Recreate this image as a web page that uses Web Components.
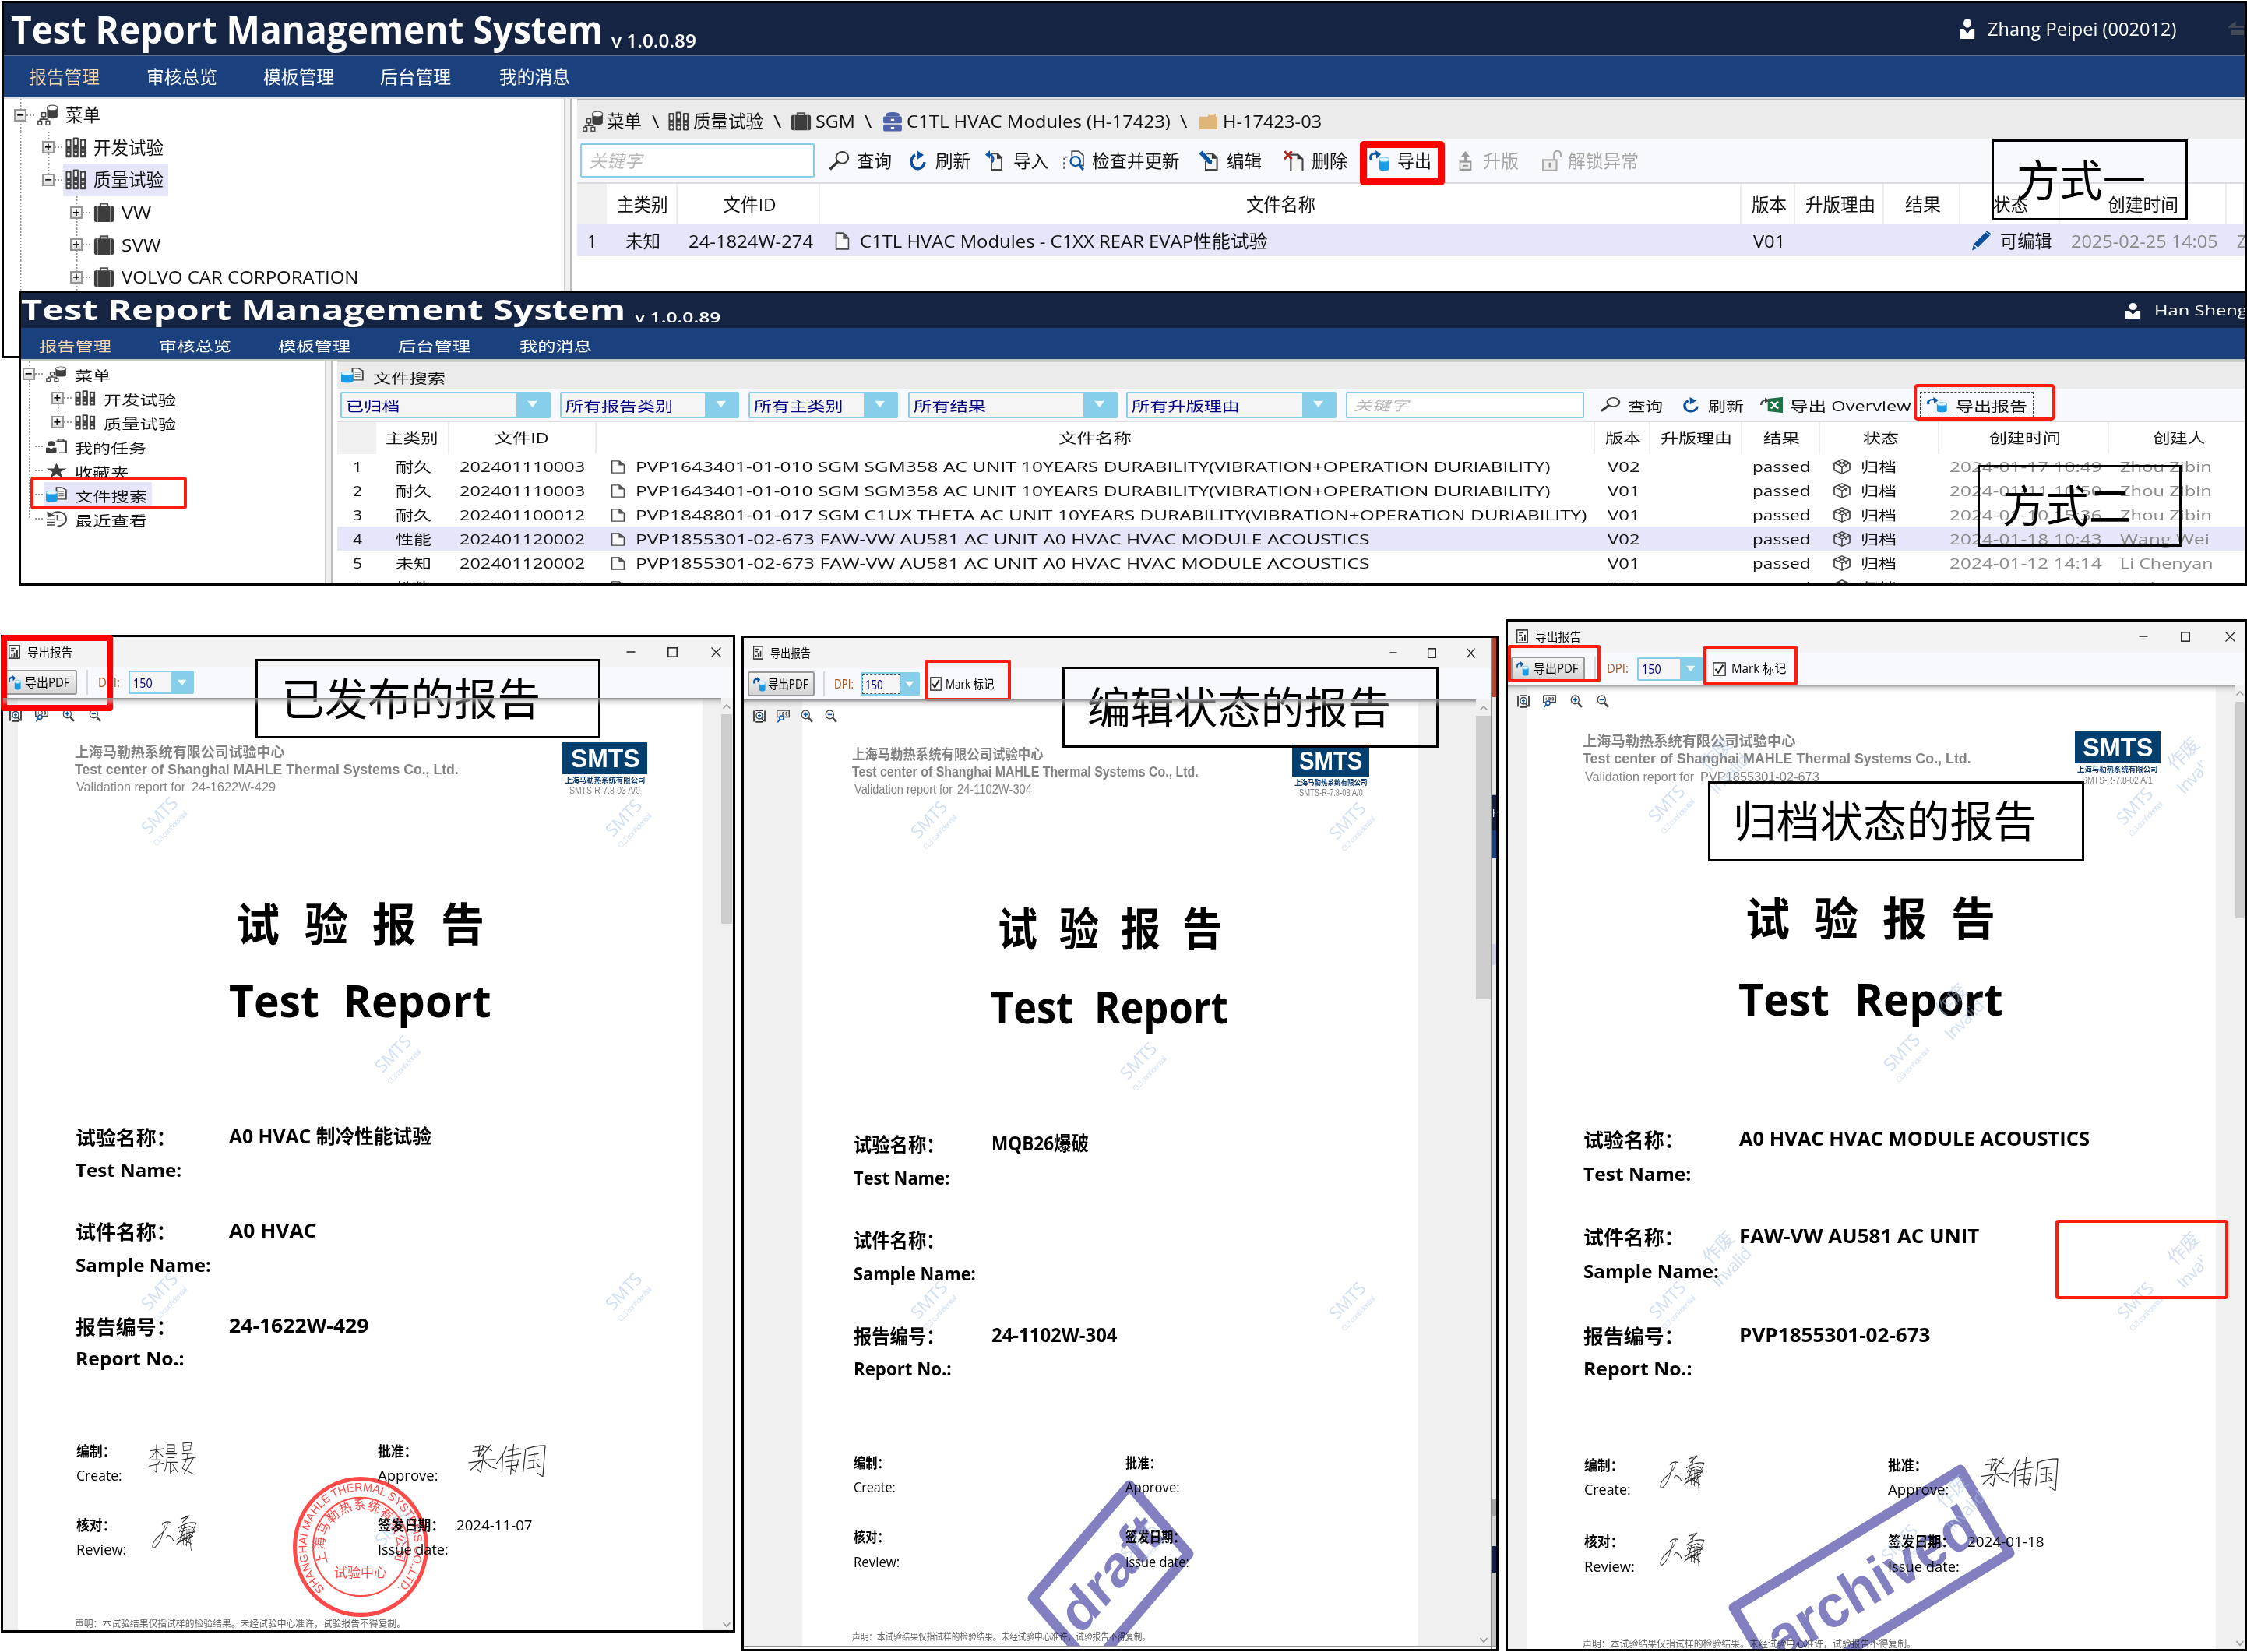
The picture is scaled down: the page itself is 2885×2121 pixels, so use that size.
<!DOCTYPE html>
<html lang="zh">
<head>
<meta charset="utf-8">
<title>Test Report Management System</title>
<style>
html,body{margin:0;padding:0;background:#fff}
body{width:2885px;height:2121px;overflow:hidden;font-family:"Open Sans","Noto Sans CJK SC",sans-serif;color:#111}
</style>
</head>
<body>
<guide-board></guide-board>
<script>
/* ---------- small layout helpers ---------- */
const FLEX = `*{box-sizing:border-box}.row{display:flex;align-items:center;flex:none}.col{display:flex;flex-direction:column;flex:none}.row>div,.col>div{flex:none}.row>div{display:flex;align-items:center}`;
// Horizontal strip: items are [x, width, html]; gaps come from successive x values.
function row(ox, items, style = '') {
  let p = ox, h = '';
  for (const [x, w, html] of items) { h += `<div style="margin-left:${(x - p).toFixed(1)}px;width:${w}px">${html}</div>`; p = x + w; }
  return `<div class="row" style="${style}">${h}</div>`;
}
// Vertical stack: items are [centre y, height, html].
function col(oy, items, style = '') {
  let p = oy, h = '';
  for (const [c, ht, html] of items) { h += `<div style="margin-top:${(c - ht / 2 - p).toFixed(1)}px;height:${ht}px;display:flex;align-items:center">${html}</div>`; p = c + ht / 2; }
  return `<div class="col" style="${style}">${h}</div>`;
}
const T = (w, s, text, style = '') => `<fit-text w="${w}" s="${s}" style="${style}">${text}</fit-text>`;
const t = (x, w, s, text, style) => [x, w, T(w, s, text, style)];
const I = (name, w, h) => `<ui-icon name="${name}" w="${w}" h="${h}"></ui-icon>`;
const i = (x, w, h, name) => [x, w, I(name, w, h)];

/* ---------- text set to a given advance width ---------- */
class FitText extends HTMLElement {
  connectedCallback() {
    if (this.shadowRoot) return;
    const w = +this.getAttribute('w'), s = +this.getAttribute('s');
    this.attachShadow({ mode: 'open' }).innerHTML = `<style>:host{display:block;flex:none;width:${w}px;font-size:${s}px;line-height:${Math.round(s * 1.3)}px;height:${Math.round(s * 1.3)}px}span{display:inline-block;white-space:pre;transform-origin:0 50%}</style><span><slot></slot></span>`;
    const sp = this.shadowRoot.querySelector('span');
    const n = sp.offsetWidth;
    if (n) sp.style.transform = `scaleX(${(w / n).toFixed(4)})`;
  }
}
customElements.define('fit-text', FitText);

/* ---------- icons, 24 x 24 grid ---------- */
const PAGE = '<path d="M8 4h8l5 5v14H8z" fill="#f4f4f4" stroke="#444" stroke-width="1.8"/><path d="M15 4v6h6z" fill="#333"/>';
const ARR = '<path d="M2 11C0 6 3 2.500 9 4" fill="none" stroke="#0a56a5" stroke-width="2.600"/><path d="M7 0l6 4.500-5 5z" fill="#0a56a5"/>';
const CYL = '<path d="M11 10.500V21c0 3 11 3 11 0V10.500z" fill="#1a9be6"/><ellipse cx="16.500" cy="10.500" rx="5.500" ry="2.600" fill="#e4f5ff" stroke="#6cc3f2" stroke-width="1"/>';
const BINDER = (x, y) => `<rect x="${x}" y="${y}" width="6.4" height="${23.4 - y}" rx="1" fill="#3f3f3f"/><rect x="${x + 1.7}" y="${y + 2}" width="3" height="6.5" rx="1" fill="#f3f3f3"/><rect x="${x + 1.7}" y="14" width="3" height="1.4" fill="#ddd"/><circle cx="${x + 3.2}" cy="19.4" r="1.6" fill="#f3f3f3"/>`;
const ICONS = {
  net: '<path d="M11 4v10c0 3 12 3 12 0V4z" fill="#3f3f3f"/><ellipse cx="17" cy="4" rx="6" ry="3" fill="#fff" stroke="#555" stroke-width="1"/><path d="M7 14v3M3 20v-3h9v3" fill="none" stroke="#444" stroke-width="1.4"/><g fill="#fff" stroke="#444" stroke-width="1.3"><rect x="5" y="9.5" width="4.4" height="4.6"/><rect x=".8" y="19" width="4.2" height="4.3"/><rect x="9.8" y="19" width="4.2" height="4.3"/></g>',
  binders: BINDER(0.4, 2) + BINDER(8.6, .4) + BINDER(16.8, 2),
  casing: '<path d="M8 5V2.2h8V5" fill="none" stroke="#555" stroke-width="2"/><rect x=".8" y="4.6" width="22.4" height="18.6" rx="2" fill="#3d3d3d"/><path d="M4.2 5v18M19.800 5v18" stroke="#e8e8e8" stroke-width="1.3"/>',
  cabinet: '<path d="M4 4c0-4 16-4 16 0v2H4z" fill="#4d62a8"/><rect x="1" y="6" width="22" height="8" rx="1.5" fill="#4d62a8"/><rect x="1" y="15.500" width="22" height="8" rx="1.5" fill="#4d62a8"/><path d="M10 10h4M10 19.5h4" stroke="#fff" stroke-width="2"/>',
  folder: '<path d="M1 6h10l2-4h8v4h2v17H1z" fill="#deb679"/><path d="M13 3.500h6" stroke="#f3e2c0" stroke-width="1.5"/>',
  search: '<circle cx="15.500" cy="8" r="7" fill="#fafafa" stroke="#3c3c3c" stroke-width="1.8"/><path d="M10.500 13L1.500 22.500" stroke="#333" stroke-width="3.200"/>',
  refresh: '<path d="M9 5.500A8.500 8.500 0 1 0 21 14" fill="none" stroke="#0a4f9c" stroke-width="3.600"/><path d="M11 0l9 5.500-8.500 5.500z" fill="#0a4f9c"/>',
  imp: PAGE + '<path d="M9 14C12 10 10 5 3 5" fill="none" stroke="#0a56a5" stroke-width="2.200"/><path d="M6 0v10L0 5z" fill="#0a56a5"/>',
  check: '<path d="M10 7V1h8l5 5v12h-5" fill="none" stroke="#555" stroke-width="1.700"/><path d="M1 22V8h5" fill="none" stroke="#555" stroke-width="1.600" stroke-dasharray="3 2"/><circle cx="14" cy="13" r="5.500" fill="#eef6fd" stroke="#0a56a5" stroke-width="2"/><path d="M18 17l5 6" stroke="#0a56a5" stroke-width="3"/>',
  edit: PAGE + '<path d="M0 4L4 0l12 13-1 4-4-1z" fill="#0a56a5" stroke="#fff" stroke-width=".8"/>',
  del: PAGE.replace('M8 4h8', 'M8 5h8') + '<path d="M1 1l8 9M9 1l-8 9" stroke="#b3261e" stroke-width="2.600"/>',
  exp: CYL + ARR,
  up: '<path d="M12 13V4" stroke="#999" stroke-width="4"/><path d="M4 7l8-7 8 7z" fill="#999"/><rect x="2" y="13" width="20" height="10" fill="#eee" stroke="#999" stroke-width="2.200"/><path d="M7 18h10" stroke="#999" stroke-width="2"/>',
  lock: '<path d="M15 11V5c0-6 8-6 8 0v3" fill="none" stroke="#aaa" stroke-width="2"/><rect x="2" y="11" width="16" height="12" fill="#eee" stroke="#aaa" stroke-width="2"/><path d="M10 14v6" stroke="#999" stroke-width="2.400"/>',
  doc: '<path d="M2 1.200h12l8 7v14.600H2z" fill="#fafafa" stroke="#4a4a4a" stroke-width="2"/><path d="M13 1v8h9z" fill="#555"/>',
  pencil: '<path d="M17 2l5 4L8 20l-5-4z" fill="#0a4f9c"/><path d="M18.500 0l5 4-1 1.500-5-4zM2.400 17.500l4.200 3.500L1 23.500z" fill="#0a4f9c"/>',
  cube: '<g fill="none" stroke="#444" stroke-width="1.700" stroke-linejoin="round"><path d="M12 1l10 5.500v11L12 23 2 17.500v-11z"/><path d="M2 6.500l10 5.500 10-5.500M12 12v11M7 3.800l10 5.500v4M17 3.800L7 9.300"/></g>',
  user: '<ellipse cx="12" cy="5.500" rx="6" ry="5.400" fill="#fff"/><path d="M1 12h6l5 6 5-6h6v12H1z" fill="#fff"/>',
  swap: '<path d="M24 9H5M10 3L2 9h8zM6 16h18v4H6z" fill="#454b56" stroke="#454b56" stroke-width="3"/>',
  task: '<circle cx="6" cy="8" r="4" fill="#3f3f3f"/><path d="M0 14h4l2 3 2-3h4v8H0z" fill="#3f3f3f"/><path d="M12 4h11v18h-8M14 4V1h6v3" fill="none" stroke="#444" stroke-width="1.800"/>',
  star: '<path d="M12 .5l3 8.500h8.500l-7 5.300 2.700 9L12 18l-7.200 5.300 2.700-9-7-5.300H9z" fill="#3f3f3f"/>',
  fsearch: '<path d="M12 1h6l5 4v14H12z" fill="#fff" stroke="#444" stroke-width="1.600"/><path d="M14.500 7h6M14.500 10.500h6M14.500 14h6" stroke="#555" stroke-width="1.300"/><path d="M0 9v12c0 3 13 3 13 0V9z" fill="#1a9be6"/><ellipse cx="6.500" cy="9" rx="6.500" ry="2.600" fill="#e4f5ff" stroke="#6cc3f2"/>',
  history: '<path d="M7 4c7-6 16-1 16 8s-7 12-10 11" fill="none" stroke="#444" stroke-width="2"/><path d="M1 1l1 9 8-3z" fill="#444"/><path d="M1 13.500h9M1 17.500h9M1 21.500h9" stroke="#444" stroke-width="1.800"/><path d="M13 6v8h6" fill="none" stroke="#444" stroke-width="1.600"/>',
  excel: '<path d="M8 2.500L24 0v24L8 21.500z" fill="#1e7145"/><path d="M11.500 7l7.500 10.500M19 6.500L11.500 17.500" stroke="#fff" stroke-width="2.300"/><path d="M1 12C1 7 3 5 6 5" fill="none" stroke="#444" stroke-width="2"/><path d="M5 1l5 4-5 4z" fill="#444"/>',
  rep: '<rect x="1.200" y="1.200" width="21.600" height="21.600" fill="#fff" stroke="#333" stroke-width="2.200"/><path d="M5 6h9M5 10h6" stroke="#333" stroke-width="1.800"/><path d="M7 20v-4M12 20v-7M17.500 20V9" stroke="#333" stroke-width="3"/>',
  fit: '<path d="M1.500 2v20M22.500 2v20M5 1.500h14M5 22.500h14" stroke="#333" stroke-width="2.600"/><circle cx="12" cy="11" r="6" fill="#fff" stroke="#345" stroke-width="2"/><path d="M12 8v6M9 11h6" stroke="#0a56a5" stroke-width="2"/><path d="M16 16l5 5" stroke="#333" stroke-width="2.500"/>',
  one: '<path d="M1 1.500h22v12H11" fill="none" stroke="#444" stroke-width="2"/><path d="M1 1.500v12h3" fill="none" stroke="#444" stroke-width="2"/><path d="M6 5v5M11 5h2v5h-2zM17 5h2v5h-2z" fill="none" stroke="#444" stroke-width="1.400"/><circle cx="9" cy="15" r="3.800" fill="#fff" stroke="#0a56a5" stroke-width="2"/><path d="M6 18l-4 5" stroke="#0a56a5" stroke-width="2.500"/>',
  zin: '<circle cx="9.500" cy="9" r="7.600" fill="#fff" stroke="#444" stroke-width="1.800"/><path d="M9.500 5v8M5.500 9h8" stroke="#0a56a5" stroke-width="2.400"/><path d="M15 14.500l7.500 8" stroke="#444" stroke-width="3.600"/>',
  zout: '<circle cx="9.500" cy="9" r="7.600" fill="#fff" stroke="#444" stroke-width="1.800"/><path d="M5.500 9h8" stroke="#0a56a5" stroke-width="2.400"/><path d="M15 14.500l7.500 8" stroke="#444" stroke-width="3.600"/>',
  min: '<path d="M1 12h22" stroke="#222" stroke-width="3"/>',
  max: '<rect x="1.500" y="1.500" width="21" height="21" fill="none" stroke="#222" stroke-width="2.800"/>',
  close: '<path d="M1 1l22 22M23 1L1 23" stroke="#222" stroke-width="2.400"/>',
  tri: '<path d="M2 2h20L12 22z" fill="#f4fbff"/>',
  chev: '<path d="M3 17l9-9 9 9" fill="none" stroke="#999" stroke-width="3"/>',
  chevd: '<path d="M3 7l9 9 9-9" fill="none" stroke="#999" stroke-width="3"/>',
  tick: '<rect x="1.200" y="1.200" width="21.600" height="21.600" fill="#fff" stroke="#333" stroke-width="2"/><path d="M5 12l5 6 9-13" fill="none" stroke="#222" stroke-width="3"/>'
};
class UiIcon extends HTMLElement {
  connectedCallback() {
    const w = this.getAttribute('w'), h = this.getAttribute('h');
    if (!this.shadowRoot) this.attachShadow({ mode: 'open' }).innerHTML = `<style>:host{display:block;flex:none;width:${w}px;height:${h}px}svg{display:block}</style><svg width="${w}" height="${h}" viewBox="0 0 24 24" preserveAspectRatio="none">${ICONS[this.getAttribute('name')]}</svg>`;
  }
}
customElements.define('ui-icon', UiIcon);

/* ---------- combo box ---------- */
class ComboBox extends HTMLElement {
  connectedCallback() {
    if (this.shadowRoot) return;
    const g = k => +this.getAttribute(k);
    this.attachShadow({ mode: 'open' }).innerHTML = `<style>:host{display:flex;box-sizing:border-box;flex:none;width:${g('w')}px;height:${g('h')}px;border:2px solid #87ceeb;border-radius:2px;background:#f5f5f5;color:#000080}
    .v{flex:1;display:flex;align-items:center;padding-left:${g('pad') || 5}px;min-width:0;padding-top:${g('dy')}px}.a{width:${g('a')}px;background:#87ceeb;display:flex;align-items:center;justify-content:center}
    :host([focus]) .v{outline:1px dashed #555;outline-offset:-1px}</style><div class="v"><slot></slot></div><div class="a">${I('tri', g('h') * .45, g('h') * .3)}</div>`;
  }
}
customElements.define('combo-box', ComboBox);

/* ---------- tree row ---------- */
class TreeRow extends HTMLElement {
  connectedCallback() {
    if (this.shadowRoot) return;
    const g = k => this.getAttribute(k), cw = +g('cell'), ih = g('ih');
    // lines: one letter per cell; f=full, t=top half, b=bottom half, n=none
    const lines = g('lines').split(''), last = lines.length - 1;
    const cells = lines.map((l, n) => `<div class="c ${l}">${n === last ? (g('exp') ? `<b>${g('exp')}</b>` : '<b class="x"></b>') + '<u></u>' : ''}</div>`).join('');
    this.attachShadow({ mode: 'open' }).innerHTML = `<style>:host{display:flex;align-items:stretch;height:${g('h')}px;flex:none}
    .c{width:${cw}px;display:flex;align-items:center;justify-content:flex-end;background:repeating-linear-gradient(#999 0 2px,transparent 2px 4px) no-repeat ${cw / 2}px 0/1.5px 100%}
    .c.t{background-size:1.5px 50%}.c.b{background-position:${cw / 2}px 100%;background-size:1.5px 50%}.c.n{background:none}
    b{box-sizing:border-box;width:16px;height:16px;border:2px solid #969696;background:linear-gradient(#fff,#ddd);font:bold 16px/11px "Liberation Sans",sans-serif;text-align:center;color:#111}
    b.x{visibility:hidden}u{width:${(cw - 16) / 2}px;border-top:2px dotted #999}
    .i{display:flex;align-items:center;padding:0 ${g('sel') !== null ? 6 : 0}px 0 3px;margin-left:1px;${g('sel') !== null ? 'background:#e6e6fa' : ''}}ui-icon{margin-right:${g('gap') || 9}px}</style>${cells}<div class="i">${I(g('icon'), 27, ih)}<slot></slot></div>`;
  }
}
customElements.define('tree-row', TreeRow);

/* ---------- main application windows ---------- */
const GRAY = 'color:#8a8a8a';
function grid(ox, hx, cols, h) {
  // header cells with thin separators; cols: [x, w, label]; hx: separator positions
  let p = ox, html = '';
  hx.forEach((x, n) => {
    const c = cols[n];
    html += `<div style="width:${x - p}px;height:${h}px;${n ? 'border-right:2px solid #ededed' : 'background:#f0f0f0'}">${c ? `<div style="margin-left:${c[0] - p}px">${T(c[1], c[3], c[2])}</div>` : ''}</div>`;
    p = x;
  });
  return `<div class="row">${html}</div>`;
}
const WIN = `${FLEX}:host{display:flex;flex-direction:column;box-sizing:border-box;border:3px solid #000;background:#fff;overflow:hidden}
.top{background:#152442;color:#fff}.nav{background:#1a417e;color:#fff}.main{display:flex;flex:1;min-height:0}.side{flex:none;overflow:hidden}
.split{flex:none;background:#f0f0f0;border-left:2px solid #ccc;border-right:3px solid #bbb}.body{flex:1;min-width:0;overflow:hidden;display:flex;flex-direction:column}
.inp{box-sizing:border-box;border:2px solid #87ceeb;background:#fff;border-radius:2px;display:flex;align-items:center;color:#b8b8b8;font-style:italic}.g{color:#a6a6a6}`;
const NAV = ['报告管理', '审核总览', '模板管理', '后台管理', '我的消息'];
class AppLatest extends HTMLElement {
  connectedCallback() {
    if (this.shadowRoot) return;
    const s = 22.5, tr = (a, w, txt) => `<tree-row h="41.6" cell="36" ih="27" ${a}>${T(w, s, txt)}</tree-row>`;
    this.attachShadow({ mode: 'open' }).innerHTML = `<style>${WIN}.side{width:719px;padding:0 0 0 3px}.split{width:11px;margin-right:6px}</style>
    ${row(5, [[14, 760, `<div style="margin-top:2px">${T(760, 48, 'Test Report Management System', 'font-weight:700')}</div>`], [785, 109, `<div style="margin-top:30px">${T(109, 23, 'v 1.0.0.89', 'font-weight:600')}</div>`], i(2516, 20, 26, 'user'), t(2552, 242, 23, 'Zhang Peipei (002012)'), i(2861, 20, 20, 'swap')], 'height:66px').replace('class="row"', 'class="row top"')}
    ${row(5, NAV.map((n, k) => t([37, 188, 338, 488, 641][k], 91, 22.5, n, k ? '' : 'color:#f6d7b0')), 'height:55px;border-top:2px solid #60708f;border-bottom:1px solid #54698f').replace('class="row"', 'class="row nav"')}
    <div class="main" style="border-top:2px solid #ddd"><div class="side">
    ${tr('lines="f" exp="−" icon="net"', 45, '菜单')}${tr('lines="ff" exp="+" icon="binders"', 90, '开发试验')}${tr('lines="ft" exp="−" icon="binders" sel', 90, '质量试验')}
    ${tr('lines="fnf" exp="+" icon="casing"', 38, 'VW')}${tr('lines="fnf" exp="+" icon="casing"', 51, 'SVW')}${tr('lines="fnf" exp="+" icon="casing"', 304, 'VOLVO CAR CORPORATION')}
    </div><div class="split"></div><div class="body">
    ${row(741, [i(748, 27, 27, 'net'), t(779, 45, s, '菜单'), t(837, 9, s, '\\'), i(858, 27, 25, 'binders'), t(890, 90, s, '质量试验'), t(993, 10, s, '\\'), i(1015, 27, 25, 'casing'), t(1047, 51, s, 'SGM'), t(1110, 9, s, '\\'), i(1133, 26, 26, 'cabinet'), t(1164, 339, s, 'C1TL HVAC Modules (H-17423)'), t(1515, 9, s, '\\'), i(1539, 25, 23, 'folder'), t(1570, 127, s, 'H-17423-03')], 'height:51px;background:#ebebeb;border-top:2px solid #b5b5b5;padding-top:4px')}
    ${row(741, [[745, 301, `<div class="inp" style="width:301px;height:44px;padding-left:9px">${T(69, s, '关键字')}</div>`], i(1064, 27, 25, 'search'), t(1100, 45, s, '查询'), i(1166, 24, 26, 'refresh'), t(1201, 45, s, '刷新'), i(1265, 24, 26, 'imp'), t(1301, 45, s, '导入'), i(1365, 27, 26, 'check'), t(1402, 113, s, '检查并更新'), i(1539, 27, 26, 'edit'), t(1575, 45, s, '编辑'), i(1648, 28, 27, 'del'), t(1684, 46, s, '删除'), i(1758, 28, 27, 'exp'), t(1794, 44, s, '导出'), i(1873, 17, 25, 'up'), t(1904, 46, s, '升版', 'color:#a6a6a6'), i(1979, 26, 27, 'lock'), t(2013, 91, s, '解锁异常', 'color:#a6a6a6')], 'height:58px;background:#f8f8ff;border-bottom:2px solid #dcdcdc')}
    ${grid(741, [779, 870, 1053, 2236, 2305, 2419, 2517, 2645, 2859, 2882], [null, [792, 66, '主类别', s], [928, 69, '文件ID', s], [1600, 89, '文件名称', s], [2249, 45, '版本', s], [2318, 90, '升版理由', s], [2446, 46, '结果', s], [2559, 45, '状态', s], [2706, 91, '创建时间', s]], 52)}
    ${row(741, [t(754, 12, s, '1'), t(803, 45, s, '未知'), t(884, 160, s, '24-1824W-274'), i(1072, 19, 23, 'doc'), t(1104, 523, s, 'C1TL HVAC Modules - C1XX REAR EVAP性能试验'), t(2251, 41, s, 'V01'), i(2531, 26, 26, 'pencil'), t(2568, 67, s, '可编辑'), t(2659, 189, s, '2025-02-25 14:05', GRAY), t(2872, 12, s, 'Z', GRAY)], 'height:41px;background:#e6e6fa;padding-top:1px')}
    </div></div>`;
  }
}
customElements.define('app-latest', AppLatest);

class AppSearch extends HTMLElement {
  connectedCallback() {
    if (this.shadowRoot) return;
    const s = 17.5, tr = (a, w, txt) => `<tree-row h="31.100" cell="37" ih="20" gap="10" ${a}><div style="margin-top:5px">${T(w, s, txt)}</div></tree-row>`;
    const cb = (x, w, a, tw, txt) => [x, w, `<combo-box w="${w}" h="34" a="${a}" pad="5" dy="4">${T(tw, s, txt)}</combo-box>`];
    const a1 = 'PVP1643401-01-010 SGM SGM358 AC UNIT 10YEARS DURABILITY(VIBRATION+OPERATION DURIABILITY)';
    const a3 = 'PVP1848801-01-017 SGM C1UX THETA AC UNIT 10YEARS DURABILITY(VIBRATION+OPERATION DURIABILITY)';
    const a4 = 'PVP1855301-02-673 FAW-VW AU581 AC UNIT A0 HVAC HVAC MODULE ACOUSTICS';
    const rows = [['耐久', '202401110003', a1, 1174, 'V02', '2024-01-17 10:49', 'Zhou Zibin', 118], ['耐久', '202401110003', a1, 1174, 'V01', '2024-01-11 10:50', 'Zhou Zibin', 118], ['耐久', '202401100012', a3, 1222, 'V01', '2024-01-10 15:36', 'Zhou Zibin', 118], ['性能', '202401120002', a4, 942, 'V02', '2024-01-18 10:43', 'Wang Wei', 115], ['未知', '202401120002', a4, 942, 'V01', '2024-01-12 14:14', 'Li Chenyan', 120], ['性能', '202401120001', 'PVP1855301-02-674 FAW-VW AU581 AC UNIT A0 HVAC AIR FLOW MEASUREMENT', 928, 'V01', '2024-01-12 10:24', 'Li Chenyan', 120]];
    this.attachShadow({ mode: 'open' }).innerHTML = `<style>${WIN}.side{width:390px;padding-top:0}.side tree-row{margin-left:-9px}.split{width:11px;margin-right:5px}</style>
    ${row(27, [[27, 776, `<div style="margin-top:-3px">${T(776, 36.5, 'Test Report Management System', 'font-weight:700')}</div>`], [815, 111, `<div style="margin-top:18px">${T(111, 18, 'v 1.0.0.89', 'font-weight:600')}</div>`], i(2728, 21, 20, 'user'), t(2766, 120, 18, 'Han Sheng')], 'height:45px').replace('class="row"', 'class="row top"')}
    ${row(27, NAV.map((n, k) => t([50, 204, 357, 511, 667][k], 93, 17.5, n, k ? '' : 'color:#f6d7b0')), 'height:40px;padding-top:6px').replace('class="row"', 'class="row nav"')}
    <div class="main" style="border-top:2px solid #c8c8c8"><div class="side"><div style="height:1px"></div>
    ${tr('lines="f" exp="−" icon="net"', 46, '菜单')}${tr('lines="ff" exp="+" icon="binders"', 93, '开发试验')}${tr('lines="ft" exp="+" icon="binders"', 93, '质量试验')}${tr('lines="f" icon="task"', 92, '我的任务')}${tr('lines="f" icon="star"', 70, '收藏夹')}${tr('lines="f" icon="fsearch" sel', 93, '文件搜索')}${tr('lines="t" icon="history"', 93, '最近查看')}
    </div><div class="split"></div><div class="body">
    ${row(433, [i(438, 29, 20, 'fsearch'), [479, 93, `<div style="margin-top:6px">${T(93, s, '文件搜索')}</div>`]], 'height:36px;background:#ebebeb;border-top:2px solid #d0d0d0')}
    ${row(433, [cb(437, 270, 42, 70, '已归档'), cb(719, 230, 42, 138, '所有报告类别'), cb(961, 192, 42, 115, '所有主类别'), cb(1166, 269, 42, 93, '所有结果'), cb(1446, 270, 42, 139, '所有升版理由'), [1728, 306, `<div class="inp" style="width:306px;height:34px;padding-left:8px;padding-top:2px">${T(71, s, '关键字')}</div>`], i(2054, 27, 19, 'search'), t(2090, 45, s, '查询', 'margin-top:3px'), i(2159, 23, 20, 'refresh'), t(2193, 46, s, '刷新', 'margin-top:3px'), i(2260, 29, 20, 'excel'), t(2298, 155, s, '导出 Overview', 'margin-top:3px'), [2465, 146, `<div style="width:146px;height:33px;border:1.500px dashed #444;display:flex;align-items:center;gap:9px;padding-left:8px">${I('exp', 28, 20)}${T(92, s, '导出报告', 'margin-top:3px')}</div>`]], 'height:43px;background:#f8f8ff;border-bottom:2px solid #dcdcdc')}
    ${grid(433, [483, 577, 766, 2048, 2119, 2237, 2337, 2490, 2708, 2890], [null, [495, 68, '主类别', s], [635, 70, '文件ID', s], [1359, 94, '文件名称', s], [2061, 46, '版本', s], [2132, 92, '升版理由', s], [2264, 47, '结果', s], [2392, 46, '状态', s], [2554, 92, '创建时间', s], [2764, 68, '创建人', s]], 41)}
    ${rows.map((r, k) => row(433, [t(453, 12, s, k + 1 + ''), t(508, 46, s, r[0]), t(590, 161, s, r[1]), i(784, 19, 17, 'doc'), t(816, r[3], s, r[2]), t(2064, 41, s, r[4]), t(2250, 75, s, 'passed'), i(2353, 24, 20, 'cube'), t(2389, 46, s, '归档'), t(2503, 195, s, r[5], GRAY), t(2722, r[7], s, r[6], GRAY)], `height:31px;padding-top:1px;${k === 3 ? 'background:#e6e6fa' : ''}`)).join('')}
    </div></div>`;
  }
}
customElements.define('app-search', AppSearch);

/* ---------- handwriting, seal, stamps, watermarks ---------- */
const SIG = {
  // drawn on a 100 x 44 pad
  li: '<path d="M4 12l26-3M16 4v18M16 11C12 17 7 20 3 22M17 12l12 8M7 24h17l-8 7M16 30v10l-4-2M2 32l28-4M36 4h14v9H37zM38 9h11M34 16h20M36 16c0 12-1 18-5 23M38 21h12M36 27h20M42 27v14l6-4M46 29l10 11M66 2l16-1-2 10-13 1zM67 6l14-1M65 16l20-1M74 15v6M64 24l27-4M76 19L65 35l22 8M86 21L68 42"/>',
  chai: '<path d="M9 4l11-2-6 14M15 2l-2 15M6 10l14-2M21 3l9 6M29 1L17 17M1 25c12-1 22-5 34-4M20 14l-4 24-4-4M17 22L3 35M19 21c5 6 10 11 17 12M49 3C46 12 42 19 36 26M44 15l-1 23M51 9l13-3M47 17l20-4M58 0l-4 41M47 24l17-3-4 16-5-5M49 30l15-2M72 7c8-3 17-5 26-5l-3 42-7-5M73 8l-3 29M77 15l12-2M77 23l13-2M76 33l15-3M84 13l-1 19M87 26l4 5"/>',
  pei: '<path d="M22 12c4-3 10-4 17-3M34 10C32 20 20 22 8 30 0 36-1 42 6 40 16 36 24 24 28 13M31 28c2-5 12-2 15 4l2-3M62 5l18-4-14 8M72 2c-2 12-4 18-10 24M57 16c9-4 24-8 38-6l-6 8M64 16l-5 5M66 17l10-2M63 21l12-3M80 14l8 2M78 18l10 1M55 30c10-5 22-9 38-9M66 21c-2 8-6 12-13 15M57 34l26-10M69 23l-2 14M75 20l-1 18M80 20l4 24M92 18L73 36M61 27l25 9M70 30l18-4"/>'
};
const sig = (n, x, y, w, h) => `<svg x="${x}" y="${y}" width="${w}" height="${h}" viewBox="0 0 100 44" preserveAspectRatio="none" fill="none" stroke="#2a2a2a" stroke-width="1.200" stroke-linecap="round" stroke-linejoin="round">${SIG[n]}</svg>`;
const wm = (x, y) => `<g transform="translate(${x} ${y}) rotate(-46)" fill="#a9c2e2" fill-opacity=".52"><text x="-28" y="2" font-size="22.500" textLength="56">SMTS</text><text x="-31" y="19" font-size="9.500" textLength="58">CL3 confidential</text></g>`;
const inv = (x, y) => `<g transform="translate(${x} ${y}) rotate(-46)" fill="#a9c2e2" fill-opacity=".52"><text x="-20" y="-7" font-size="24" textLength="47">作废</text><text x="-34" y="22" font-size="22" textLength="62">Invalid</text></g>`;
const SEAL = `<g transform="translate(463 1986) scale(1 1.035)" fill="none" stroke="#ff4a4a"><circle r="84.500" stroke-width="5"/><circle r="61" stroke-width="2"/>
<path id="o" d="M-46 52A69.400 69.400 0 1 1 44 53.600" stroke="none"/><path id="n" d="M-42 20A46.500 46.500 0 1 1 42 20" stroke="none"/>
<g fill="#ff4a4a" stroke="none"><text font-family="Liberation Sans" font-size="14.500" letter-spacing=".1"><textPath href="#o" textLength="334" lengthAdjust="spacing">SHANGHAI MAHLE THERMAL SYSTEMS CO.,LTD.</textPath></text><text font-size="16"><textPath href="#n" textLength="184" lengthAdjust="spacing">上海马勒热系统有限公司</textPath></text><text x="-34" y="38" font-size="17" textLength="68">试验中心</text></g></g>`;
function stamp(l, tp, r, txt, fs, x, y, len) {
  const u = [tp[0] - l[0], tp[1] - l[1]], v = [r[0] - tp[0], r[1] - tp[1]], U = Math.hypot(...u), V = Math.hypot(...v);
  const b = [l[0] + v[0], l[1] + v[1]];
  return `<path d="M${l}L${tp}L${r}L${b}z" fill="none" stroke="#8280c0" stroke-width="13" stroke-linejoin="round"/><text transform="matrix(${u[0] / U} ${u[1] / U} ${v[0] / V} ${v[1] / V} ${l[0]} ${l[1]})" x="${x}" y="${y}" font-family="Liberation Sans" font-weight="700" font-size="${fs}" textLength="${len}" lengthAdjust="spacingAndGlyphs" fill="#8280c0">${txt}</text>`;
}
const marks = (f, list) => list.map(p => f(...p)).join('');

/* ---------- report viewer window ---------- */
const REPORTS = {
  published: { x: 1, y: 815, w: 943, h: 1281, title: [856, 896, 837, 877], page: [23, 902], bar: [926, 940], thumb: [917, 1186],
    tb: [i(11, 15, 18, 'rep'), t(35, 58, 15, '导出报告'), i(804, 12, 12, 'min'), i(857, 13, 13, 'max'), i(913, 13, 13, 'close')],
    btn: [6, 93, 32, 10, 32, 58], sep: 111, dpi: [126, 28], combo: [165, 84, 27, 25], view: [12, 45, 80, 114, 918],
    hx: [96, 270, 493, 98, 140, 245.5, 108, '24-1622W-429'], hy: [965, 988, 1011], logo: [722, 109, 88, 104, 91, 'SMTS-R-7.8-03 A/0', 953, 994, 1002, 1015],
    big: [304, 53, 87.500, 1185, 294, 116, 440, 191, 1283], lx: 97, vx: 294, ys: [1460, 1501, 1581, 1623, 1703, 1743], vals: [['A0 HVAC 制冷性能试验', 260], ['A0 HVAC', 112], ['24-1622W-429', 180]], lw: [130, 136, 174, 140],
    sx: [98, 485], sw: [51, 59, 64, 51, 78, 86, 91], sy: [1863, 1894, 1958, 1989], date: ['2024-11-07', 586, 98], foot: [95.5, 425, 2085],
    stamp: SEAL, over: marks(wm, [[209, 1051], [805, 1054], [509, 1357], [209, 1662], [805, 1662], [509, 1965]]) + sig('li', 190, 1851, 68, 43) + sig('chai', 601, 1854, 101, 42) + sig('pei', 195, 1945, 60, 46), bottom: 2093 },
  draft: { x: 952, y: 816, w: 972, h: 1304, title: [858, 898, 838, 878], page: [1030, 1821], bar: [1895, 1914], thumb: [919, 1283],
    tb: [i(967, 13, 18, 'rep'), t(989, 52, 15, '导出报告'), i(1784, 10, 12, 'min'), i(1833, 11, 13, 'max'), i(1883, 11, 13, 'close')],
    btn: [960, 86, 32, 966, 986, 52], sep: 1057, dpi: [1071, 25], combo: [1105, 76, 23, 23], mark: [1194, 15, 1214, 62], view: [967, 997, 1028, 1059, 919],
    hx: [1094, 246, 445, 1096.6, 126, 1229, 96, '24-1102W-304'], hy: [968, 991, 1014], logo: [1659, 99, 81, 94, 82, 'SMTS-R-7.8-03 A/0', 956, 997, 1005, 1018],
    big: [1282, 48, 79, 1191, 1272, 106, 1405, 172, 1291], lx: 1096, vx: 1273, ys: [1469, 1511, 1592, 1634, 1715, 1756], vals: [['MQB26爆破', 125], ['', 10], ['24-1102W-304', 162]], lw: [117, 123, 157, 126],
    sx: [1096, 1445], sw: [46, 54, 59, 46, 70, 77, 82], sy: [1878, 1909, 1973, 2005], date: null, foot: [1094, 383, 2102],
    stamp: stamp([1326, 2052], [1450, 1907], [1526, 1995], 'draft', 70, 14, 79, 166), over: marks(wm, [[1197, 1056], [1734, 1058], [1466, 1366], [1197, 1673], [1734, 1674], [1466, 1982]]), bottom: 2113 },
  archived: { x: 1933, y: 795, w: 952, h: 1325, title: [838, 879, 817, 859], page: [1960, 2845], bar: [2870, 2882], thumb: [901, 1179],
    tb: [i(1947, 15, 18, 'rep'), t(1971, 59, 15, '导出报告'), i(2746, 12, 12, 'min'), i(2800, 12, 13, 'max'), i(2857, 13, 13, 'close')],
    btn: [1940, 95, 31, 1946, 1968.5, 58], sep: 2047, dpi: [2063, 28], combo: [2102, 85, 28, 25], mark: [2199, 17, 2223, 70], view: [1948, 1981, 2016, 2050, 900],
    hx: [2032, 274, 499, 2035, 140, 2183, 153, 'PVP1855301-02-673'], hy: [951, 974, 997.5], logo: [2664, 109.5, 90, 104, 91, 'SMTS-R-7.8-02 A/1', 938.5, 980, 988, 1002],
    big: [2242, 54, 88, 1178, 2232, 117, 2381, 191, 1281], lx: 2033, vx: 2233, ys: [1463, 1506, 1588, 1631, 1715, 1756], vals: [['A0 HVAC HVAC MODULE ACOUSTICS', 450], ['FAW-VW AU581 AC UNIT', 308], ['PVP1855301-02-673', 246]], lw: [130, 138, 174, 140],
    sx: [2034, 2424], sw: [51, 60, 64.500, 51, 79, 86, 92], sy: [1881, 1912, 1979, 2011], date: ['2024-01-18', 2526, 99], foot: [2032, 428, 2111],
    stamp: stamp([2226, 2064], [2517, 1887], [2580, 1994], 'archived', 76, 18, 90, 302), over: marks(wm, [[2144, 1036], [2745, 1039], [2446, 1355], [2145, 1673], [2746, 1674], [2443, 1985]]) + marks(inv, [[2212, 981], [2514, 1297], [2215, 1615], [2515, 1928]]) + '<svg x="1960" y="890" width="868" height="800" viewBox="1960 890 868 800">' + inv(2812, 981) + inv(2812, 1616) + '</svg>' + sig('pei', 2131, 1868, 60, 46) + sig('pei', 2131, 1967, 60, 46) + sig('chai', 2543, 1871, 101, 43), bottom: 2117 }
};
class ReportViewer extends HTMLElement {
  connectedCallback() {
    if (this.shadowRoot) return;
    const r = REPORTS[this.getAttribute('kind')], ox = r.x + 3, oy = r.y + 3, [p0, p1] = r.page, [b0, b1] = r.bar, [t1, t2, tc] = r.title;
    const B = 'font-weight:700', A = 'font-family:Liberation Sans,sans-serif;', K = 'color:#838383;', X = r.hx, L = r.logo, G = r.big;
    const tool = [[r.btn[0], r.btn[1], `<div class="btn" style="width:${r.btn[1]}px;height:${r.btn[2]}px;padding-left:${r.btn[3] - r.btn[0] - 1}px;gap:${r.btn[4] - r.btn[3] - 18}px">${I('exp', 17, 19)}${T(r.btn[5], 16, '导出PDF')}</div>`],
      [r.sep, 2, '<div style="width:2px;height:32px;background:#d9d9de"></div>'], t(r.dpi[0], r.dpi[1], 16, 'DPI:', 'color:#a0561e'),
      [r.combo[0], r.combo[1], `<combo-box w="${r.combo[1]}" h="30" a="${r.combo[2]}" pad="4" dy="1" ${r === REPORTS.draft ? 'focus' : ''}>${T(r.combo[3], 15.500, '150')}</combo-box>`]];
    if (r.mark) tool.push(i(r.mark[0], r.mark[1], 18, 'tick'), t(r.mark[2], r.mark[3], 16, 'Mark 标记'));
    const lab = ['试验名称：', 'Test Name:', '试件名称：', 'Sample Name:', '报告编号：', 'Report No.:'];
    const lw = [r.lw[0], r.lw[1], r.lw[0], r.lw[2], r.lw[0], r.lw[3]];
    const left = p0;
    const info = lab.map((s, k) => [r.ys[k], 34, row(left, k % 2 ? [t(r.lx, lw[k], 24, s, B)] : [t(r.lx, lw[k], 25.500, s, B), t(r.vx, r.vals[k / 2][1], 24.500, r.vals[k / 2][0], B + ';margin-top:-3px')])]);
    const W = r.sw, S = 18.5;
    const signs = [[t(r.sx[0], W[0], S, '编制：', B), t(r.sx[1], W[3], S, '批准：', B)], [t(r.sx[0], W[1], S, 'Create:'), t(r.sx[1], W[4], S, 'Approve:')],
      [t(r.sx[0], W[0], S, '核对：', B), t(r.sx[1], W[5], S, '签发日期：', B)].concat(r.date ? [t(r.date[1], r.date[2], S, r.date[0])] : []), [t(r.sx[0], W[2], S, 'Review:'), t(r.sx[1], W[6], S, 'Issue date:')]]
      .map((it, k) => [r.sy[k], 26, row(left, it)]);
    const heads = [[r.hy[0], 22, row(left, [t(X[0], X[1], 18.500, '上海马勒热系统有限公司试验中心', K + B)])], [r.hy[1], 22, row(left, [t(X[0], X[2], 18.500, 'Test center of Shanghai MAHLE Thermal Systems Co., Ltd.', A + K + B)])], [r.hy[2], 22, row(left, [t(X[3], X[4], 17, 'Validation report for', A + K), t(X[5], X[6], 17, X[7], A + K)])]];
    const lg = [[(L[6] + L[7]) / 2, L[7] - L[6], `<div style="width:${L[1]}px;height:${L[7] - L[6]}px;background:#03406f;display:flex;align-items:center;justify-content:center;padding-bottom:1px">${T(L[2], 34, 'SMTS', A + B + ';color:#fff')}</div>`],
      [L[8], 11, row(L[0], [t(L[0] + 3, L[3], 9.500, '上海马勒热系统有限公司', 'color:#0d3a6b;' + B)])], [L[9], 13, row(L[0], [t(L[0] + (L[1] - L[4]) / 2, L[4], 12, L[5], A + K)])]];
    const top = t2, hEnd = 1030;
    const svgAttr = `width="${r.w}" height="${r.bottom - t2}" viewBox="${ox} ${t2} ${r.w} ${r.bottom - t2}" font-family="Open Sans,Noto Sans CJK SC,sans-serif"`;
    this.attachShadow({ mode: 'open' }).innerHTML = `<style>${FLEX}:host{display:flex;flex-direction:column;box-sizing:border-box;position:absolute;left:${r.x}px;top:${r.y}px;width:${r.w}px;height:${r.h}px;border:3px solid #000;background:#fff;overflow:hidden;color:#000}
    .btn{display:flex;align-items:center;border:2px solid #999;border-radius:3px;background:linear-gradient(#f6f6f6,#d4d4d4)}
    .view{display:flex;flex:none;height:${r.bottom - t2}px;background:#f0f0f0;position:relative}
    .view::before{content:"";position:absolute;left:0;top:0;width:${b0 - ox}px;height:10px;background:linear-gradient(#8c8c8c,rgba(190,190,190,.5) 40%,rgba(255,255,255,0));z-index:2}
    .page{flex:none;background:#fff;overflow:hidden;margin-left:${p0 - ox}px;width:${p1 - p0}px}
    .bar{flex:none;margin-left:${b0 - p1}px;width:${b1 - b0}px;display:flex;flex-direction:column;align-items:center;background:#f0f0f0}
    .thumb{background:#cdcdcd;align-self:stretch}.ink{position:absolute;left:0;top:0}.mul{mix-blend-mode:multiply}.vt{position:absolute;left:0;top:0}
    .edge{position:absolute;right:0;top:0;width:7px;height:1298px;display:flex;flex-direction:column;border-left:2px solid #888;overflow:hidden;font-size:13px;color:#fff}.edge div{flex:none}</style>
    ${row(ox, r.tb, `height:${t1 - oy}px;padding-bottom:${Math.max(0, (t1 + oy) / 2 - tc) * 2}px;background:#f3f3f3;padding-top:${Math.max(0, tc - (t1 + oy) / 2) * 2}px`)}
    ${row(ox, tool, `height:${t2 - t1}px;background:#f8f8ff`)}
    <div class="view"><div class="page"><div style="display:flex;height:${hEnd - top}px">${col(top, heads, `width:${L[0] - p0}px`)}${col(top, lg, `width:${L[1]}px`)}</div>
    ${col(hEnd, [[G[3], 76, row(left, '试验报告'.split('').map((c, k) => t(G[0] + k * G[2] - 1, G[1] + 3, 58, c, B)))], [G[8], 78, row(left, [t(G[4], G[5], 58, 'Test', B), t(G[6], G[7], 58, 'Report', B)])]].concat(info, signs, [[r.foot[2], 16, row(left, [t(r.foot[0], r.foot[1], 12.500, '声明：本试验结果仅指试样的检验结果。未经试验中心准许，试验报告不得复制。', 'color:#666')])]]))}</div>
    <div class="bar"><div style="height:${r.thumb[0] - t2}px;display:flex;align-items:center">${I('chev', 12, 12)}</div><div class="thumb" style="height:${r.thumb[1] - r.thumb[0]}px"></div><div style="margin-top:auto">${I('chevd', 12, 14)}</div></div>
    <svg class="ink mul" ${svgAttr}>${r.stamp}</svg><svg class="ink" ${svgAttr}>${r.over}</svg>
    <div class="vt">${row(ox, ['fit', 'one', 'zin', 'zout'].map((n, k) => i(r.view[k], n === 'one' ? 17 : 16, 17, n)), `margin-top:${r.view[4] - 8.500 - t2}px`)}</div></div>
    ${r === REPORTS.draft ? '<div style="height:2px;background:#8c8c8c"></div><div class="edge"><div style="height:76px;background:#b7472a"></div><div style="height:126px;background:#e8e8e8;border-bottom:1px solid #aaa"></div><div style="height:45px;background:#141f40;padding-top:14px">h</div><div style="height:36px;background:#17407e"></div><div style="height:110px;background:#e9e9e9"></div><div style="height:27px;background:#d0cfe8"></div><div style="height:685px;background:#ececec"></div><div style="height:22px;background:#a5a5a5"></div><div style="height:39px;background:#d8d8d8"></div><div style="height:34px;background:#141f4a"></div><div style="height:94px;background:#c4c4c4"></div></div>' : ''}`;
  }
}
customElements.define('report-viewer', ReportViewer);

/* ---------- annotations ---------- */
class MarkBox extends HTMLElement {
  connectedCallback() {
    if (this.shadowRoot) return;
    const [x, y, x2, y2, b, rad] = this.getAttribute('at').split(',').map(Number);
    this.attachShadow({ mode: 'open' }).innerHTML = `<style>:host{position:absolute;box-sizing:border-box;left:${x}px;top:${y}px;width:${x2 - x}px;height:${y2 - y}px;border:${b}px solid ${this.getAttribute('c') || '#000'};border-radius:${rad || 0}px;display:flex;align-items:center;padding-left:${this.getAttribute('pad') || 0}px;color:#000}</style><slot></slot>`;
  }
}
customElements.define('mark-box', MarkBox);

class GuideBoard extends HTMLElement {
  connectedCallback() {
    if (this.shadowRoot) return;
    const note = (at, pad, w, s, txt) => `<mark-box at="${at}" pad="${pad}">${T(w, s, txt, 'margin-top:-2px')}</mark-box>`;
    this.attachShadow({ mode: 'open' }).innerHTML = `<style>:host{display:block;position:relative;width:2885px;height:2121px;overflow:hidden}
    app-latest{position:absolute;left:2px;top:1px;width:2883px;height:459px}app-search{position:absolute;left:24px;top:373px;width:2861px;height:379px}</style>
    <app-latest></app-latest><app-search></app-search>
    <report-viewer kind="published"></report-viewer><report-viewer kind="draft"></report-viewer><report-viewer kind="archived"></report-viewer>
    <mark-box at="1746,181,1855,238,9,5" c="#f00"></mark-box><mark-box at="39,612,240,654,4,4" c="#fd1c10"></mark-box><mark-box at="2457,493,2639,540,4,5" c="#fd1c10"></mark-box>
    <mark-box at="1,815,145,913,8,4" c="#f00"></mark-box><mark-box at="1188,847,1298,900,4,3" c="#fd1c10"></mark-box><mark-box at="1936,828,2055,876,4,3" c="#fd1c10"></mark-box><mark-box at="2187,829,2308,880,4,3" c="#fd1c10"></mark-box><mark-box at="2639,1566,2861,1668,4,4" c="#fd1c10"></mark-box>
    ${note('2557,179,2809,283,3', 29, 166, 56, '方式一')}${note('2539,597,2801,702,3', 29, 166, 56, '方式二')}
    ${note('328,846,771,948,3', 30, 333, 56, '已发布的报告')}${note('1364,856,1847,960,3', 29, 390, 56, '编辑状态的报告')}${note('2193,1003,2676,1106,3', 29, 390, 56, '归档状态的报告')}`;
  }
}
customElements.define('guide-board', GuideBoard);
</script>
</body>
</html>
